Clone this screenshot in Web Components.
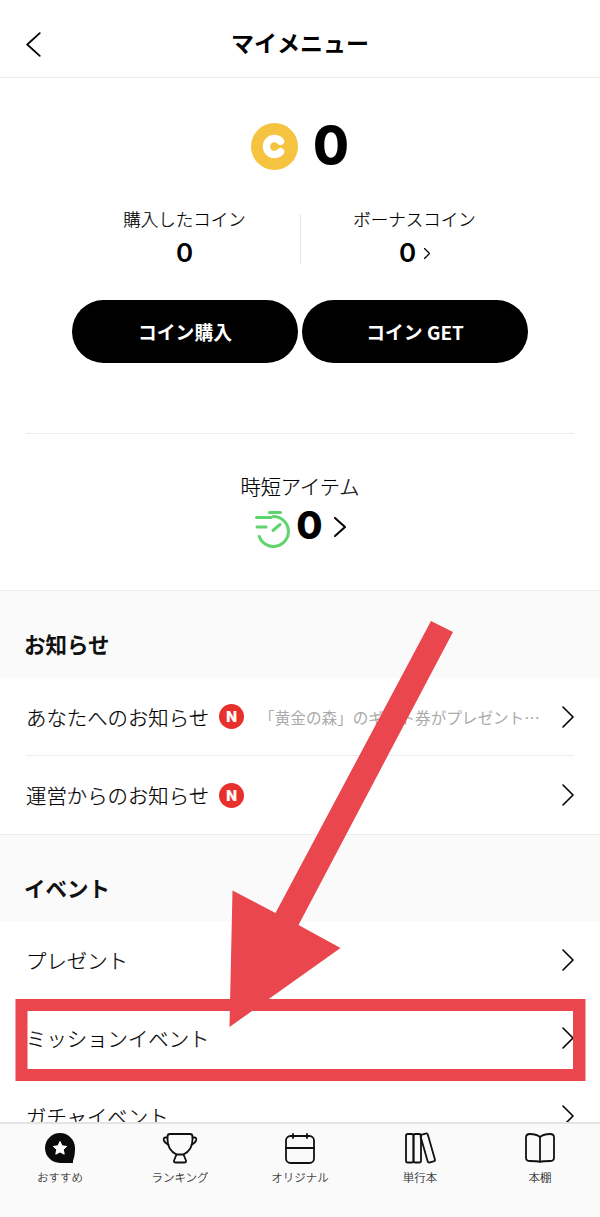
<!DOCTYPE html>
<html lang="ja">
  <head>
    <meta charset="utf-8" />
    <meta name="viewport" content="width=device-width,initial-scale=1.0" />
    <title>マイメニュー</title>
    <style>
      html,
      body {
        margin: 0;
        height: 100%;
        overflow: hidden;
        background: #fff;
        color: #000;
        font-family: 'Noto Sans CJK JP', 'Noto Sans', sans-serif;
      }
    </style>

    <template id="chevron-icon-template">
      <style>
        :host {
          display: inline-flex;
          flex: none;
        }
        svg {
          display: block;
          width: var(--chevron-width, 12px);
          height: var(--chevron-height, 22px);
        }
        polyline {
          fill: none;
          stroke: currentColor;
          stroke-width: var(--chevron-stroke, 1.6px);
          stroke-linecap: round;
          stroke-linejoin: round;
        }
      </style>
      <svg viewBox="0 0 12 22" preserveAspectRatio="none">
        <polyline points="1,1 11,11 1,21" vector-effect="non-scaling-stroke" />
      </svg>
    </template>

    <template id="app-header-template">
      <style>
        :host {
          display: grid;
          grid-template-columns: 1fr auto 1fr;
          align-items: center;
          flex: none;
          height: 65px;
          padding: 12px 26px 0;
          border-bottom: 1px solid #ececec;
        }
        h1 {
          margin: 0 0 5px;
          font-size: 23px;
          line-height: 32px;
          font-weight: 700;
        }
        chevron-icon {
          transform: scaleX(-1);
          justify-self: start;
          --chevron-width: 15px;
          --chevron-height: 25px;
          --chevron-stroke: 1.8px;
        }
      </style>
      <chevron-icon></chevron-icon>
      <h1><slot></slot></h1>
    </template>

    <template id="coin-summary-template">
      <style>
        :host {
          display: block;
          flex: none;
          height: 356px;
          margin: 0 26px;
          border-bottom: 1px solid #ececec;
          box-sizing: border-box;
        }
        .total {
          display: flex;
          justify-content: center;
          align-items: center;
          gap: 15px;
          padding-top: 45px;
          height: 46px;
        }
        .coin {
          display: block;
          width: 47px;
          height: 47px;
        }
        .amount {
          font-family: Inter, sans-serif;
          font-size: 52px;
          line-height: 46px;
          font-weight: 800;
        }
        .split {
          display: grid;
          grid-template-columns: 230px 1px 230px;
          grid-template-rows: 50px;
          justify-content: center;
          margin-top: 45px;
          height: 50px;
        }
        .cell {
          display: flex;
          flex-direction: column;
          align-items: center;
        }
        .cell:last-child {
          padding-right: 2px;
        }
        .rule {
          background: #e6e6e6;
        }
        .label {
          font-size: 17.500px;
          font-weight: 300;
          -webkit-text-stroke: 0.2px currentColor;
          line-height: 10px;
          color: #000;
        }
        .value {
          display: flex;
          align-items: center;
          gap: 8px;
          font-family: Inter, sans-serif;
          font-size: 26px;
          line-height: 30px;
          font-weight: 600;
          margin-top: 14px;
        }
        .value chevron-icon {
          --chevron-width: 6px;
          --chevron-height: 11px;
          --chevron-stroke: 1.3px;
        }
        .actions {
          display: flex;
          justify-content: center;
          gap: 4px;
          margin-top: 36px;
        }
        pill-button {
          width: 226px;
        }
      </style>
      <div class="total">
        <svg class="coin" viewBox="0 0 47 47">
          <circle cx="23.5" cy="23.5" r="23.5" fill="#f5c33f" />
          <path
            d="M29.6 18.4a8 8 0 1 0 0 10.2"
            fill="none"
            stroke="#fff"
            stroke-width="7.4"
            stroke-linecap="round"
          />
        </svg>
        <span class="amount">0</span>
      </div>
      <div class="split">
        <div class="cell">
          <span class="label">購入したコイン</span>
          <span class="value">0</span>
        </div>
        <div class="rule"></div>
        <div class="cell">
          <span class="label">ボーナスコイン</span>
          <span class="value">0<chevron-icon></chevron-icon></span>
        </div>
      </div>
      <div class="actions">
        <pill-button>コイン購入</pill-button>
        <pill-button>コイン GET</pill-button>
      </div>
    </template>

    <template id="pill-button-template">
      <style>
        :host {
          display: flex;
          align-items: center;
          justify-content: center;
          height: 63px;
          border-radius: 32px;
          background: #000;
          color: #fff;
          font-size: 18.800px;
          font-weight: 700;
        }
      </style>
      <slot></slot>
    </template>

    <template id="item-summary-template">
      <style>
        :host {
          display: flex;
          flex-direction: column;
          align-items: center;
          flex: none;
          height: 157px;
          box-sizing: border-box;
          padding-top: 39px;
          border-bottom: 1px solid #ececec;
        }
        .label {
          font-size: 20.200px;
          font-weight: 300;
          -webkit-text-stroke: 0.2px currentColor;
          line-height: 28px;
          color: #000;
        }
        .value {
          display: flex;
          align-items: flex-start;
          margin-top: 9px;
          height: 38px;
          font-family: Inter, sans-serif;
          font-size: 38px;
          line-height: 30px;
          font-weight: 800;
        }
        svg {
          display: block;
          width: 36px;
          height: 38px;
          margin-right: 6px;
        }
        chevron-icon {
          margin: 7px 0 0 11px;
          --chevron-width: 12px;
          --chevron-height: 20px;
          --chevron-stroke: 2px;
        }
      </style>
      <span class="label">時短アイテム</span>
      <div class="value">
        <svg viewBox="0 0 36 38" fill="none" stroke="#5ed56c" stroke-width="3" stroke-linecap="round">
          <path d="M15.500 2.500h11" />
          <path d="M2.500 7.500h14.500" />
          <path d="M3 17h9" />
          <path d="M19 6.500a15 15 0 1 1-13.700 20" />
          <path d="M19 20.500l7-6" />
        </svg>
        <span>0</span>
        <chevron-icon></chevron-icon>
      </div>
    </template>

    <template id="section-heading-template">
      <style>
        :host {
          display: block;
          flex: none;
          height: 87px;
          box-sizing: border-box;
          padding: 38px 24px 0;
          background: #fafafa;
          font-size: 21.500px;
          line-height: 30px;
          font-weight: 700;
          color: #111;
        }
        :host([compact]) {
          height: 86px;
        }
      </style>
      <slot></slot>
    </template>

    <template id="menu-row-template">
      <style>
        :host {
          display: flex;
          align-items: center;
          flex: none;
          height: 78px;
          box-sizing: border-box;
          margin: 0 26px;
          border-bottom: 1px solid #ececec;
          font-size: 20.400px;
          font-weight: 300;
          -webkit-text-stroke: 0.2px currentColor;
          color: #000;
          white-space: nowrap;
        }
        :host([last]) {
          height: 79px;
          margin: 0;
          padding: 0 26px;
        }
        :host([plain]) {
          border-bottom: 0;
        }
        .badge {
          display: none;
          width: 25px;
          height: 25px;
          margin-left: 10px;
          border-radius: 50%;
          background: #e8302c;
          color: #fff;
          font-family: Inter, sans-serif;
          font-size: 14px;
          font-weight: 800;
          line-height: 25px;
          text-align: center;
        }
        :host([badge]) .badge {
          display: block;
        }
        .note {
          flex: 1;
          min-width: 0;
          margin-left: 15px;
          font-size: 15.600px;
          font-weight: 400;
          -webkit-text-stroke: 0;
          color: #aaa;
          overflow: hidden;
        }
      </style>
      <slot></slot>
      <span class="badge">N</span>
      <span class="note"><slot name="note"></slot></span>
      <chevron-icon></chevron-icon>
    </template>

    <template id="tab-bar-template">
      <style>
        :host {
          display: grid;
          grid-template-columns: repeat(5, 1fr);
          flex: none;
          height: 95px;
          box-sizing: border-box;
          border-top: 2px solid #e4e4e4;
          background: #fafafa;
        }
      </style>
      <slot></slot>
    </template>

    <template id="tab-item-template">
      <style>
        :host {
          display: flex;
          flex-direction: column;
          align-items: center;
          padding-top: 6px;
          font-size: 11.500px;
          font-weight: 300;
          -webkit-text-stroke: 0.15px currentColor;
          line-height: 16px;
          color: #222;
        }
        ::slotted(svg) {
          display: block;
          width: 36px;
          height: 36px;
          margin-bottom: 3px;
        }
      </style>
      <slot name="icon"></slot>
      <slot></slot>
    </template>

    <template id="callout-overlay-template">
      <style>
        :host {
          position: absolute;
          inset: 0;
          display: block;
          pointer-events: none;
        }
        svg {
          display: block;
          width: 100%;
          height: 100%;
        }
      </style>
      <svg viewBox="0 0 600 1217" fill="#e9464d">
        <path fill-rule="evenodd" d="M15.500 999H585.500V1081H15.500ZM27.500 1011V1069H573V1011Z" />
        <path d="M431 621L453 632L298.500 925L340.500 948L229.500 1027L232.500 890.500L275.500 913Z" />
      </svg>
    </template>

    <script type="module">
      const register = (name, templateId) => {
        const template = document.querySelector(`#${templateId}`);
        customElements.define(
          name,
          class extends HTMLElement {
            constructor() {
              super();
              this.attachShadow({mode: 'open'}).appendChild(
                template.content.cloneNode(true)
              );
            }
          }
        );
      };

      register('chevron-icon', 'chevron-icon-template');
      register('app-header', 'app-header-template');
      register('pill-button', 'pill-button-template');
      register('coin-summary', 'coin-summary-template');
      register('item-summary', 'item-summary-template');
      register('section-heading', 'section-heading-template');
      register('menu-row', 'menu-row-template');
      register('tab-bar', 'tab-bar-template');
      register('tab-item', 'tab-item-template');
      register('callout-overlay', 'callout-overlay-template');
    </script>
    <style>
      .screen {
        position: relative;
        display: flex;
        flex-direction: column;
        width: 600px;
        height: 1217px;
        overflow: hidden;
      }
      .scroll {
        flex: 1;
        min-height: 0;
        display: flex;
        flex-direction: column;
        overflow: hidden;
      }
    </style>
  </head>

  <body>
    <div class="screen">
      <app-header>マイメニュー</app-header>
      <div class="scroll">
        <coin-summary></coin-summary>
        <item-summary></item-summary>
        <section-heading>お知らせ</section-heading>
        <menu-row badge>
          あなたへのお知らせ
          <span slot="note">「黄金の森」のギフト券がプレゼント…</span>
        </menu-row>
        <menu-row badge last>運営からのお知らせ</menu-row>
        <section-heading compact>イベント</section-heading>
        <menu-row plain>プレゼント</menu-row>
        <menu-row plain>ミッションイベント</menu-row>
        <menu-row plain>ガチャイベント</menu-row>
      </div>
      <tab-bar>
        <tab-item>
          <svg slot="icon" viewBox="0 0 36 36">
            <path d="M18 3a15 15 0 1 0 0 30h13v-2.500c1.300-2.800 2-6 2-12.500a15 15 0 0 0-15-15z" fill="#0a0a0a" />
            <path d="M18 11.500l2 4.300 4.700.6-3.400 3.200.9 4.600-4.200-2.300-4.200 2.300.9-4.600-3.400-3.200 4.700-.6z" fill="#fff" stroke="#fff" stroke-linejoin="round" />
          </svg>
          おすすめ
        </tab-item>
        <tab-item>
          <svg slot="icon" viewBox="0 0 36 36" fill="none" stroke="#111" stroke-width="1.800" stroke-linejoin="round" stroke-linecap="round">
            <path d="M8 4h20c1.500 0 2.500 1 2.500 2.500v3c0 7-4 12.500-9 15h-7c-5-2.500-9-8-9-15v-3C5.500 5 6.500 4 8 4z" />
            <path d="M5.500 7.500H3.500c-1.500 0-2 1-1.700 2.500.5 2 2 3.500 4.700 4.500" />
            <path d="M30.500 7.500h2c1.500 0 2 1 1.700 2.500-.5 2-2 3.500-4.700 4.500" />
            <path d="M14.500 24.500l-2.500 6c-.3 1 .3 2 1.500 2h9c1.200 0 1.800-1 1.500-2l-2.500-6" />
          </svg>
          ランキング
        </tab-item>
        <tab-item>
          <svg slot="icon" viewBox="0 0 36 36" fill="none" stroke="#111" stroke-width="1.800" stroke-linecap="round">
            <rect x="4" y="6" width="28" height="27" rx="4.500" />
            <path d="M4 18h28" />
            <path d="M11 4v4M25 4v4" />
          </svg>
          オリジナル
        </tab-item>
        <tab-item>
          <svg slot="icon" viewBox="0 0 36 36" fill="none" stroke="#111" stroke-width="1.800" stroke-linejoin="round">
            <rect x="4" y="4" width="7.500" height="28.500" rx="1.800" />
            <rect x="11.500" y="4" width="7.500" height="28.500" rx="1.800" />
            <rect x="22" y="3.500" width="7.500" height="29" rx="1.800" transform="rotate(-16 25.750 18)" />
          </svg>
          単行本
        </tab-item>
        <tab-item>
          <svg slot="icon" viewBox="0 0 36 36" fill="none" stroke="#111" stroke-width="1.800" stroke-linejoin="round">
            <path d="M18 7c-2.500-2-6-3-10-3-2 0-4 1-4 3.500v20c0 2 1.500 3.500 3.500 3.500 4.500 0 8 0 10.500 1 2.500-1 6-1 10.500-1 2 0 3.500-1.500 3.500-3.500v-20C32 5 30 4 28 4c-4 0-7.500 1-10 3z" />
            <path d="M18 7v25" />
          </svg>
          本棚
        </tab-item>
      </tab-bar>
      <callout-overlay></callout-overlay>
    </div>
  </body>
</html>
